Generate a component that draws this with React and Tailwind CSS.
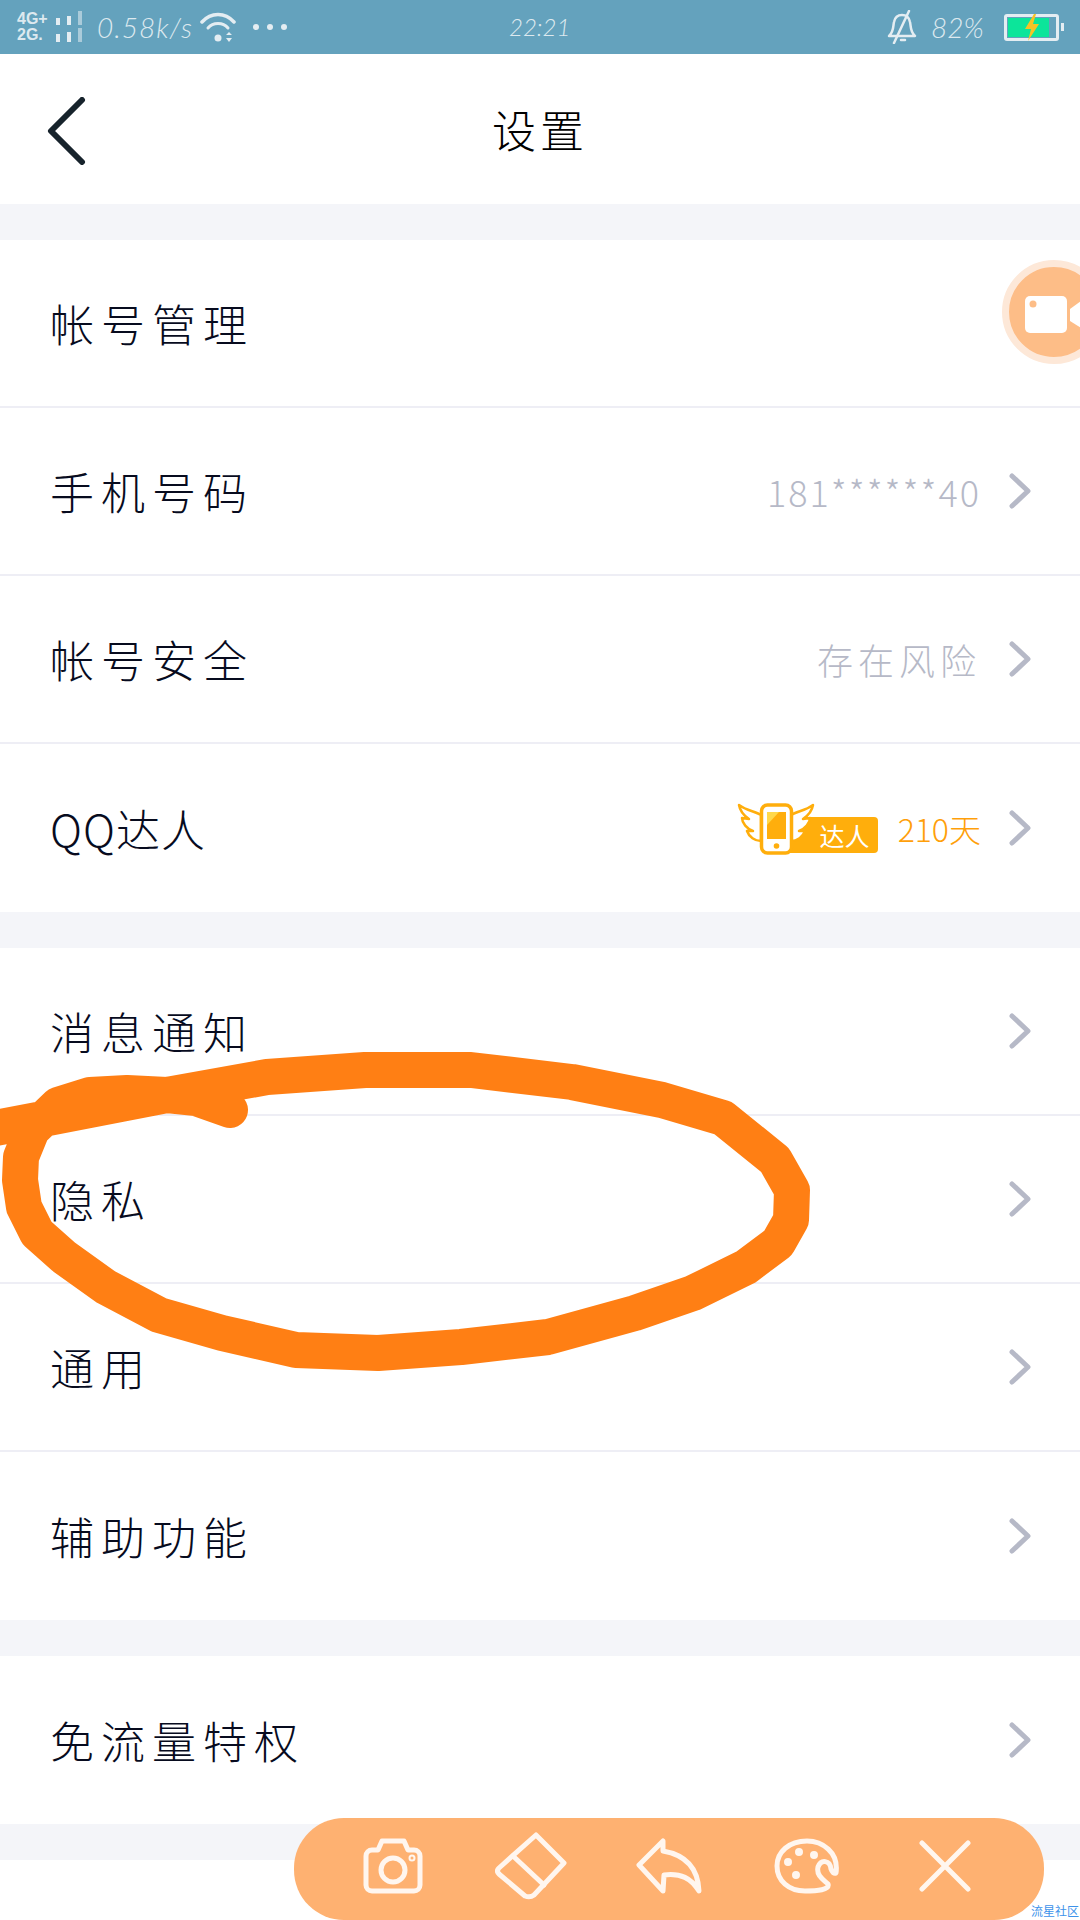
import React from 'react';

const cjk = { fontFamily: '"Noto Sans CJK SC", "Noto Sans", sans-serif' };

const strokePoints =
  '230,1110 196,1098 167,1095 127,1093 90,1095 58,1105 32,1130 21,1157 20,1180 24,1207 37,1233 64,1257 106,1287 159,1315 222,1333 296,1350 378,1353 461,1347 548,1337 635,1313 693,1293 746,1267 778,1243 791,1220 792,1190 775,1160 723,1118 662,1100 572,1082 471,1070 365,1070 267,1077 167,1095 48,1118 -10,1129';

function Chevron() {
  return (
    <svg width="22" height="36" viewBox="0 0 22 36" fill="none" className="shrink-0 ml-[28px]">
      <path d="M3 3 L19 18 L3 33" stroke="#b6b9c7" strokeWidth="5" strokeLinecap="round" strokeLinejoin="round" />
    </svg>
  );
}

function DarenBadge() {
  return (
    <div className="relative w-[141px] h-[54px] flex justify-end items-end mr-[20px]">
      <div className="w-[104px] h-[36px] rounded-[4px] bg-[#ffae0c] mb-[2px] flex items-center justify-end pr-[8px] text-white text-[25px] leading-none" style={cjk}>
        达人
      </div>
      <svg width="78" height="54" viewBox="0 0 78 54" fill="none" className="absolute left-0 top-0">
        <path d="M2 4 C10 10 18 10 24 14 L24 40 C18 40 12 36 10 30 L16 30 C10 28 5 22 5 17 L12 18 C6 14 3 10 2 4Z" fill="#fff" stroke="#ffae0c" strokeWidth="2.5" strokeLinejoin="round" />
        <path d="M76 4 C68 10 60 10 54 14 L54 40 C60 40 66 36 68 30 L62 30 C68 28 73 22 73 17 L66 18 C72 14 75 10 76 4Z" fill="#fff" stroke="#ffae0c" strokeWidth="2.5" strokeLinejoin="round" />
        <rect x="24.5" y="4" width="30" height="48" rx="6" fill="#fff" stroke="#ffae0c" strokeWidth="3.5" />
        <rect x="30" y="11" width="19" height="27" fill="#ffae0c" />
        <path d="M30 11 H42 L30 24Z" fill="#ffd84a" />
        <circle cx="39.5" cy="45" r="2.8" fill="#ffae0c" />
      </svg>
    </div>
  );
}

function Row({ label, labelClass = 'tracking-[7px]', value, valueClass, badge, noChevron, last }) {
  return (
    <div className={`h-[168px] flex items-center pl-[50px] pr-[49px] ${last ? '' : 'border-b-2 border-[#eeeef5]'}`}>
      <span className={`text-[44px] text-[#070b1e] font-light ${labelClass}`} style={cjk}>{label}</span>
      <div className="ml-auto flex items-center">
        {badge && <DarenBadge />}
        {value && (
          <span className={`font-light ${valueClass}`} style={cjk}>
            {value}
          </span>
        )}
        {!noChevron && <Chevron />}
      </div>
    </div>
  );
}

function Section({ rows }) {
  return (
    <div className="bg-white">
      {rows.map((r, i) => (
        <Row key={r.label} {...r} last={i === rows.length - 1} />
      ))}
    </div>
  );
}

function StatusBar() {
  return (
    <div className="h-[54px] bg-[#64a2bd] flex items-center text-[#dde9ef] relative shrink-0">
      <div className="w-[37px] ml-[17px] flex flex-col font-bold text-[16px] leading-[16px]" style={{ fontFamily: '"Liberation Sans", sans-serif' }}>
        <span>4G+</span>
        <span>2G.</span>
      </div>
      <svg width="28" height="32" viewBox="0 0 28 32" className="ml-[1px] shrink-0" fill="#e4edf2">
        <rect x="1" y="7" width="4" height="7" />
        <rect x="12" y="5" width="4" height="9" />
        <rect x="23" y="0" width="4" height="14" opacity="0.55" />
        <rect x="1" y="23" width="4" height="8" />
        <rect x="12" y="21" width="4" height="10" />
        <rect x="23" y="17" width="4" height="14" opacity="0.55" />
      </svg>
      <span className="ml-[14px] w-[100px] text-[28px] tracking-[1px] font-light italic" style={{ fontFamily: 'Lato, sans-serif' }}>0.58k/s</span>
      <svg width="36" height="32" viewBox="0 0 36 32" fill="none" className="shrink-0 ml-[3px]">
        <path d="M2 11 C11 1 25 1 34 11" stroke="#e4edf2" strokeWidth="3.5" strokeLinecap="round" />
        <path d="M8 17 C13 11 23 11 28 17" stroke="#e4edf2" strokeWidth="3" strokeLinecap="round" />
        <circle cx="18" cy="27" r="3.5" fill="#e4edf2" />
        <path d="M29 21 L32 24 H26Z M29 31 L32 27 H26Z" fill="#e4edf2" />
      </svg>
      <div className="flex ml-[17px] gap-[8px]">
        <span className="w-[6px] h-[6px] rounded-full bg-[#e4edf2]" />
        <span className="w-[6px] h-[6px] rounded-full bg-[#e4edf2]" />
        <span className="w-[6px] h-[6px] rounded-full bg-[#e4edf2]" />
      </div>
      <span className="absolute left-[509px] text-[24px] font-light italic" style={{ fontFamily: 'Lato, sans-serif' }}>22:21</span>
      <div className="ml-auto flex items-center">
        <svg width="30" height="34" viewBox="0 0 30 34" fill="none" stroke="#e4edf2" strokeWidth="2.5" strokeLinecap="round" strokeLinejoin="round">
          <path d="M2 26 C7 22 6 16 7 12 C8 7 11 5 15 5 C19 5 22 7 23 12 C24 16 23 22 28 26 Z" />
          <path d="M22 1 L7 33" />
          <path d="M14 30 H18" />
        </svg>
        <span className="ml-[14px] w-[58px] text-[28px] font-light italic" style={{ fontFamily: 'Lato, sans-serif' }}>82%</span>
        <div className="ml-[15px] w-[55px] h-[27px] border-[3px] border-[#e4edf2] rounded-[3px] relative p-[1px]">
          <div className="w-[41px] h-full bg-[#0ce59a]" />
          <svg width="16" height="27" viewBox="0 0 16 27" className="absolute left-[17px] -top-[3px]">
            <path d="M10 0 L1 15 H7 L4 27 L15 10 H9 L12 0Z" fill="#f6c324" />
          </svg>
        </div>
        <div className="w-[3px] h-[8px] ml-[2px] mr-[16px] bg-[#e4edf2]" />
      </div>
    </div>
  );
}

function Toolbar() {
  const cell = 'w-[138px] flex justify-center';
  const ic = { stroke: '#fff6ef', strokeWidth: 5, fill: 'none', strokeLinecap: 'round', strokeLinejoin: 'round' };
  return (
    <div className="absolute left-[294px] top-[1818px] w-[750px] h-[102px] rounded-[50px] bg-[#feb171] flex justify-center items-center pb-[6px]">
      <div className={cell}>
        <svg width="60" height="56" viewBox="0 0 60 56" {...ic}>
          <path d="M9 12 H15 L19 3 H41 L45 12 H51 A6 6 0 0 1 57 18 V47 A6 6 0 0 1 51 53 H9 A6 6 0 0 1 3 47 V18 A6 6 0 0 1 9 12Z" />
          <circle cx="30" cy="32" r="12" />
          <circle cx="49" cy="20" r="1" />
        </svg>
      </div>
      <div className={cell}>
        <svg width="72" height="68" viewBox="0 0 72 68" {...ic}>
          <path d="M41 3 L69 31 L39 63 Q35 66 30 64 L4 42 Q1 39 4 36Z" />
          <path d="M18 24 L49 53" />
        </svg>
      </div>
      <div className={cell}>
        <svg width="66" height="56" viewBox="0 0 66 56" {...ic}>
          <path d="M3 27 L27 3 V13 C50 17 62 30 63 53 C55 40 45 35 28 37 L27 53Z" />
        </svg>
      </div>
      <div className={cell}>
        <svg width="66" height="56" viewBox="0 0 66 56" {...ic}>
          <path d="M62 35 C65 14 48 3 33 3 C15 3 3 14 3 28 C3 43 15 53 31 53 C43 53 56 52 54 46 C50 42 42 38 44 29 C47 21 56 22 57 31 C58 34 60 36 62 35Z" />
          <circle cx="25" cy="14" r="1.5" fill="#fff6ef" />
          <circle cx="40" cy="17" r="1.5" fill="#fff6ef" />
          <circle cx="14" cy="24" r="1.5" fill="#fff6ef" />
          <circle cx="22" cy="37" r="1.5" fill="#fff6ef" />
        </svg>
      </div>
      <div className={cell}>
        <svg width="52" height="52" viewBox="0 0 52 52" {...ic}>
          <path d="M3 3 L49 49 M49 3 L3 49" />
        </svg>
      </div>
    </div>
  );
}

export default function App() {
  return (
    <div className="relative w-[1080px] h-[1920px] overflow-hidden bg-[#f4f5f9] flex flex-col">
      <StatusBar />

      {/* Header */}
      <div className="h-[150px] bg-white relative flex items-center justify-center shrink-0">
        <svg width="40" height="68" viewBox="0 0 40 68" fill="none" className="absolute left-[47px] top-[43px]">
          <path d="M35 3 L4 34 L35 65" stroke="#17232c" strokeWidth="6" strokeLinecap="round" strokeLinejoin="round" />
        </svg>
        <span className="text-[44px] tracking-[4px] text-black font-light" style={cjk}>设置</span>
      </div>

      <div className="h-[36px] shrink-0" />
      <Section
        rows={[
          { label: '帐号管理', noChevron: true },
          { label: '手机号码', value: '181******40', valueClass: 'text-[36px] tracking-[2px] text-[#b6b9c7]' },
          { label: '帐号安全', value: '存在风险', valueClass: 'text-[36px] tracking-[5px] text-[#b6b9c7]' },
          { label: 'QQ达人', labelClass: 'tracking-[1px]', value: '210天', valueClass: 'text-[32px] text-[#ff9f0a]', badge: true },
        ]}
      />
      <div className="h-[36px] shrink-0" />
      <Section
        rows={[
          { label: '消息通知' },
          { label: '隐私' },
          { label: '通用' },
          { label: '辅助功能' },
        ]}
      />
      <div className="h-[36px] shrink-0" />
      <Section rows={[{ label: '免流量特权' }]} />
      <div className="h-[36px] shrink-0" />
      <div className="flex-1 bg-white" />

      {/* Hand drawn annotation */}
      <svg width="1080" height="1920" viewBox="0 0 1080 1920" fill="none" className="absolute left-0 top-0 pointer-events-none">
        <polyline points={strokePoints} stroke="#ff7f14" strokeWidth="36" strokeLinecap="round" strokeLinejoin="round" />
      </svg>

      {/* Screen record floating button */}
      <div className="absolute left-[1002px] top-[260px] w-[104px] h-[104px] rounded-full bg-[#fdbd87] border-[7px] border-[#fde8d8]">
        <svg width="60" height="44" viewBox="0 0 60 44" className="absolute left-[16px] top-[29px]">
          <rect x="0" y="0" width="42" height="37" rx="5" fill="#fff" />
          <circle cx="8" cy="8" r="3.5" fill="#fdbd87" />
          <path d="M45 13 L56 5 V32 L45 25Z" fill="#fff" />
        </svg>
      </div>

      <Toolbar />

      <span className="absolute right-[1px] bottom-[1px] text-[12px] leading-[16px] text-[#3d92ea]" style={cjk}>流星社区</span>
    </div>
  );
}
